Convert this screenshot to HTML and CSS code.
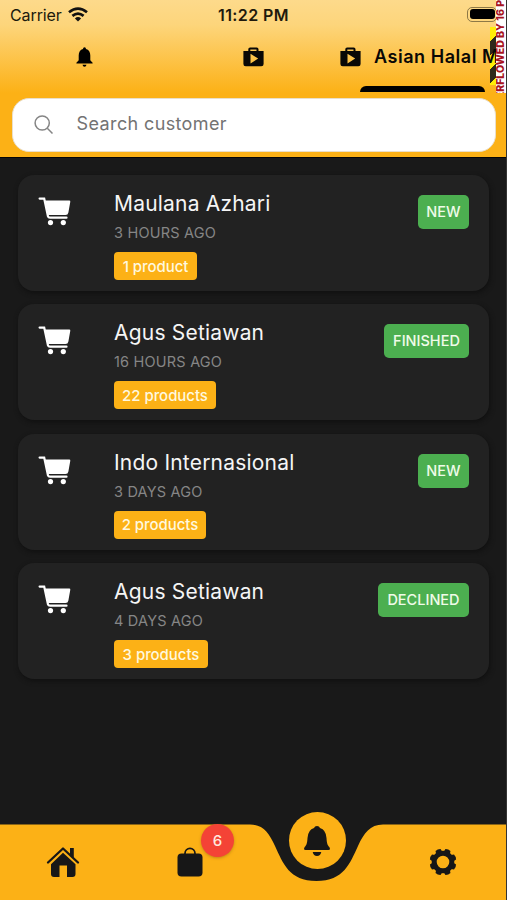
FILE: index.html
```html
<!DOCTYPE html>
<html lang="en">
<head>
<meta charset="utf-8">
<title>Orders</title>
<link rel="stylesheet" href="styles.css">
</head>
<body>
<svg class="defs" aria-hidden="true">
  <symbol id="cart" viewBox="0 0 33 29">
    <path d="M1.6 1.6H6.2L10 19.4Q10.4 20.7 12 20.7H28.5" fill="none" stroke="currentColor" stroke-width="2.2" stroke-linecap="round"/>
    <path d="M7 3.4H31.2Q32.5 3.4 32.3 4.8L30.4 15.5Q30 18 27.5 18H10.2Z" fill="currentColor"/>
    <circle cx="12.5" cy="25.6" r="2.6" fill="currentColor"/>
    <circle cx="25.3" cy="25.6" r="2.6" fill="currentColor"/>
  </symbol>
  <symbol id="shop" viewBox="0 0 21 20">
    <path fill-rule="evenodd" d="M5.3 4V2.3Q5.3.5 7.1.5H13.7Q15.5.5 15.5 2.3V4H20.6V17Q20.6 19.3 18.3 19.3H2.7Q.4 19.3.4 17V4ZM7.3 4H13.5V2.4H7.3ZM7.5 6.8V16.5L15.2 11.6Z" fill="currentColor"/>
  </symbol>
</svg>
<div class="app">
  <header class="header">
    <div class="status">
      <span class="carrier">Carrier</span>
      <svg class="wifi" viewBox="0 0 20 15"><g fill="none" stroke="#111" stroke-width="2.7"><path d="M1 5.2Q10-2 19 5.2"/><path d="M4.4 8.9Q10 4.3 15.6 8.9"/></g><path d="M6.9 11.4Q10 8.8 13.1 11.4L10 14.6Z" fill="#111"/></svg>
      <span class="clock">11:22 PM</span>
      <span class="battery"><i></i></span>
    </div>
    <div class="stripes"></div>
    <nav class="tabs">
      <a class="tab"><svg class="tab-bell" viewBox="0 0 17 20"><path d="M8.5.2Q10 .2 10 2Q14.3 3.2 14.3 8.6V13.2L16.6 15.8V16.6H.4V15.8L2.7 13.2V8.6Q2.7 3.2 7 2Q7 .2 8.5.2ZM6.5 17.7H10.5Q10.2 19.7 8.5 19.7T6.5 17.7Z"/></svg></a>
      <a class="tab"><svg class="tab-shop"><use href="#shop"/></svg></a>
      <a class="tab tab-active"><svg class="tab-shop"><use href="#shop"/></svg><span>Asian Halal M</span></a>
    </nav>
    <div class="overflow"><span>ERFLOWED BY 16 P</span></div>
    <div class="search">
      <svg viewBox="0 0 20 20"><circle cx="8.2" cy="8" r="7.1"/><path d="M13.3 13.2L18.5 18.6"/></svg>
      <span>Search customer</span>
    </div>
  </header>
  <main class="list">
    <article class="card"><svg class="cart"><use href="#cart"/></svg><div class="info"><h2>Maulana Azhari</h2><p>3 HOURS AGO</p><span class="count w1">1 product</span></div><span class="state new">NEW</span></article>
    <article class="card"><svg class="cart"><use href="#cart"/></svg><div class="info"><h2>Agus Setiawan</h2><p>16 HOURS AGO</p><span class="count w22">22 products</span></div><span class="state finished">FINISHED</span></article>
    <article class="card"><svg class="cart"><use href="#cart"/></svg><div class="info"><h2>Indo Internasional</h2><p>3 DAYS AGO</p><span class="count w2">2 products</span></div><span class="state new">NEW</span></article>
    <article class="card"><svg class="cart"><use href="#cart"/></svg><div class="info"><h2>Agus Setiawan</h2><p>4 DAYS AGO</p><span class="count w3">3 products</span></div><span class="state declined">DECLINED</span></article>
  </main>
  <footer class="bottom">
    <svg class="curve" viewBox="0 0 507 76"><path d="M0 .5H250C263 .5 269 9 275 22C283 39 289 57 316.500 57C344 57 350 39 358 22C364 9 370 .5 383 .5H507V76H0Z"/></svg>
    <div class="nav">
      <a><svg class="home" viewBox="0 0 34 32"><path d="M2 16.500L17 2.500L32 16.500" fill="none" stroke="#171717" stroke-width="2.300" stroke-linecap="round" stroke-linejoin="round"/><path d="M24 2H27.800V12L24 8.500ZM17 6.700L29.500 18.300V28Q29.500 31 26.500 31H21V19.500H13.500V31H8Q5 31 5 28V18.300Z"/></svg></a>
      <a><svg class="bag" viewBox="0 0 26 30"><path d="M8 7V6.300A5 5 0 0 1 18 6.300V7" fill="none" stroke="#171717" stroke-width="1.700"/><rect x=".5" y="6.500" width="25" height="23" rx="4"/></svg><b class="badge">6</b></a>
      <a><span class="fab"><svg viewBox="0 0 28 32"><path d="M14 1Q16.300 1 17 3.100Q23 5 23.500 13C23.800 19 24.800 20.500 26.300 22Q28 24.800 25.500 25H2.500Q0 24.800 1.700 22C3.200 20.500 4.200 19 4.500 13Q5 5 11 3.100Q11.700 1 14 1ZM9.700 27H18.300Q17.500 31 14 31T9.700 27Z"/></svg></span></a>
      <a><svg class="gear" viewBox="-14 -14 28 28"><circle r="8.800" fill="none" stroke="#171717" stroke-width="5"/><g id="teeth"><path id="tooth" d="M-3.300-10L-2.700-13Q0-14.200 2.700-13L3.300-10Z" transform="rotate(22.500)"/><use href="#tooth" transform="rotate(45)"/><use href="#tooth" transform="rotate(90)"/><use href="#tooth" transform="rotate(135)"/></g><use href="#teeth" transform="rotate(180)"/></svg></a>
    </div>
  </footer>
</div>
</body>
</html>
```

FILE: styles.css
```css
* { box-sizing: border-box; }
body { margin: 0; background: #191919; font-family: Inter, "Liberation Sans", sans-serif; }
.defs { position: absolute; width: 0; height: 0; }
svg { display: block; flex: none; }
.app { position: relative; width: 507px; height: 900px; overflow: hidden; display: flex; flex-direction: column; background: #191919; border-right: 1px solid #343434; }
.header { position: relative; height: 158px; flex: none; background: linear-gradient(#fdda8b 0, #fdd57b 25px, #fcb116 93px, #fcb116 100%); border-bottom: 1px solid #050505; }
.status { height: 30px; display: flex; align-items: center; padding-left: 10px; color: #20190c; }
.carrier { width: 57px; font-size: 16px; letter-spacing: -.1px; white-space: nowrap; }
.wifi { width: 20px; height: 15px; margin-left: 1px; margin-top: -2px; }
.clock { margin-left: 130px; width: 72px; font-size: 16px; font-weight: 600; white-space: nowrap; letter-spacing: .4px; }
.battery { margin-left: 177px; margin-top: -2px; width: 30px; height: 15px; padding: 2px; border: 1px solid #8d7846; border-radius: 5px; flex: none; }
.battery i { display: block; height: 10px; margin: -.5px; border-radius: 3px; background: #000; }
.tabs { display: grid; grid-template-columns: 169px 169px 168px; height: 63px; }
.tab { display: flex; align-items: center; justify-content: center; padding-bottom: 9px; }
.tab-bell { width: 17px; height: 20px; }
.tab-shop { width: 21px; height: 20px; color: #090806; }
.tab-active { position: relative; justify-content: flex-start; padding-left: 2px; gap: 13px; color: #090806; font-size: 18px; font-weight: 600; letter-spacing: .55px; white-space: nowrap; }
.tab-active span { margin-top: -2px; }
.tab-active::after { content: ""; position: absolute; left: 22px; bottom: 1px; width: 125px; height: 6px; border-radius: 6px 6px 0 0; background: #000; }
.stripes { position: absolute; left: 490px; top: 27px; width: 6px; height: 58px; background: repeating-linear-gradient(135deg, #ffee08 0 10px, #30291b 10px 20px); }
.overflow { position: absolute; left: 496px; top: 0; width: 11px; height: 93px; overflow: hidden; background: #fff; color: #a81422; }
.overflow span { position: absolute; left: -1px; bottom: -5px; writing-mode: vertical-rl; transform: rotate(180deg); font-size: 10.500px; line-height: 12px; font-weight: 800; white-space: nowrap; }
.search { width: 484px; height: 54px; margin: 5px 0 0 12px; padding-left: 21px; display: flex; align-items: center; background: #fff; border: 1px solid #eadfca; border-radius: 17px; color: #737373; font-size: 18px; letter-spacing: .37px; }
.search svg { width: 20px; height: 20px; fill: none; stroke: #858585; stroke-width: 1.500; }
.search span { margin: -4px 0 0 22.600px; }
.list { flex: 1; padding: 17px 0 0 18px; display: flex; flex-direction: column; gap: 13.400px; }
.card { width: 471px; height: 116px; flex: none; display: flex; align-items: flex-start; padding: 20px 20px 0; background: #222; border-radius: 16px; box-shadow: 1px 2px 5px #101010; }
.cart { width: 33px; height: 29px; margin-top: 2px; color: #fff; }
.info { margin-left: 43px; flex: 1; }
h2 { margin: -4px 0 0; font-size: 21px; line-height: 26px; font-weight: 400; letter-spacing: .2px; color: #f5f5f5; white-space: nowrap; }
p { margin: 7px 0 0; font-size: 14.500px; line-height: 18px; letter-spacing: .2px; color: #868686; }
.count { margin-top: 10px; display: flex; align-items: center; justify-content: center; height: 28px; border-radius: 4px; background: #fcb116; color: #fff8df; font-size: 15px; font-weight: 500; letter-spacing: -.05px; white-space: nowrap; }
.w1 { width: 83px; } .w22 { width: 102px; } .w2 { width: 92px; } .w3 { width: 94px; }
.state { display: flex; align-items: center; justify-content: center; height: 34px; padding-bottom: 1px; border-radius: 5px; background: #4caf50; color: #effbe8; font-size: 14.500px; font-weight: 500; flex: none; }
.new { width: 51px; } .finished { width: 85px; } .declined { width: 91px; }
.bottom { position: relative; height: 76px; flex: none; }
.curve { position: absolute; left: 0; top: 0; width: 507px; height: 76px; fill: #fcb116; }
.nav { position: relative; height: 76px; display: grid; grid-template-columns: repeat(4, 126.500px); grid-template-rows: 76px; fill: #171717; }
.nav a { position: relative; display: flex; align-items: center; justify-content: center; }
.home { width: 34px; height: 32px; }
.bag { width: 26px; height: 30px; }
.gear { width: 28px; height: 28px; }
.badge { position: absolute; left: 74.500px; top: 0; width: 33px; height: 33px; border-radius: 50%; display: flex; align-items: center; justify-content: center; background: #f44336; color: #ffe9df; font-size: 15px; font-weight: 500; box-shadow: 0 1px 3px #8a5a1480; }
.fab { position: absolute; left: 35.500px; top: -12px; width: 57px; height: 57px; display: flex; align-items: center; justify-content: center; background: #fcb116; border-radius: 50%; }
.fab svg { width: 28px; height: 32px; }
```
